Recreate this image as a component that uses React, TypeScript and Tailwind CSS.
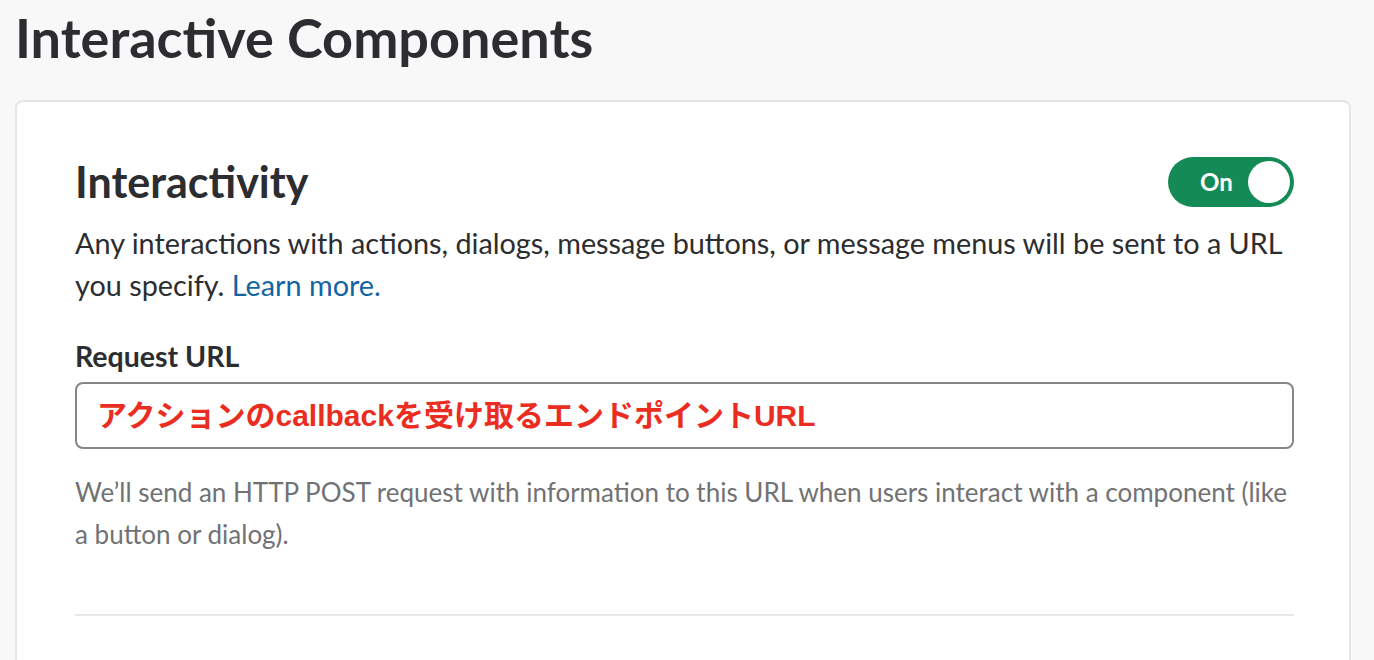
const lato = { fontFamily: "Lato, 'Noto Sans', sans-serif" };

const Toggle = () => {
  return (
    <div className="flex h-[50px] w-[126px] items-center justify-between rounded-full bg-[#148a56] pl-[32px] pr-[4px]">
      <span className="text-[24px] font-bold text-white">On</span>
      <span className="h-[42px] w-[42px] rounded-full bg-white"></span>
    </div>
  );
};

export default function App() {
  return (
    <div style={lato} className="h-[660px] overflow-hidden bg-[#f8f8f8] pl-[15px] pr-[23px] text-[#1d1c1d]">
      <h1 className="pt-[2px] text-[54px] font-bold leading-[72px] text-[#2c2d30]">Interactive Components</h1>
      <div className="mt-[26px] rounded-[8px] border-2 border-[#e6e6e6] bg-white pl-[58px] pr-[55px] pt-[50px] pb-[100px]">
        <div className="flex items-center justify-between">
          <h2 className="text-[43px] font-bold leading-[60px] text-[#2c2d30]">Interactivity</h2>
          <Toggle />
        </div>
        <p className="mt-[10px] text-[28.8px] leading-[42px] text-[#2c2d30]">
          Any interactions with actions, dialogs, message buttons, or message menus will be sent to a URL you specify.{" "}
          <span className="text-[#1264a3]">Learn more.</span>
        </p>
        <div className="mt-[32px] text-[28.5px] font-bold leading-[36px] text-[#2c2d30]">Request URL</div>
        <div className="mt-[8px] flex h-[67px] items-center rounded-[8px] border-2 border-[#868686] px-[20px]">
          <span
            style={{ fontFamily: "'Liberation Sans', 'Noto Sans CJK JP', sans-serif" }}
            className="text-[30px] font-bold text-[#ea2d20]"
          >
            アクションのcallbackを受け取るエンドポイントURL
          </span>
        </div>
        <p className="mt-[22px] text-[26px] leading-[42px] text-[#717274]">
          We’ll send an HTTP POST request with information to this URL when users interact with a component (like a button or dialog).
        </p>
        <div className="mt-[59px] h-[2px] bg-[#e8e8e8]"></div>
      </div>
    </div>
  );
}
